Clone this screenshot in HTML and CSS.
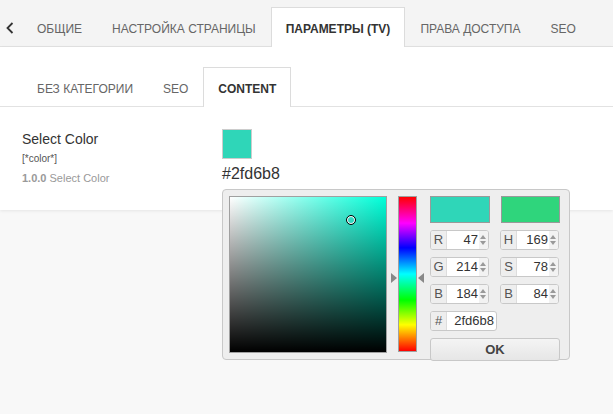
FILE: index.html
```html
<!DOCTYPE html>
<html>
<head>
<meta charset="utf-8">
<link rel="stylesheet" href="styles.css">
</head>
<body>
<div class="topbar">
  <div class="back"><svg width="8" height="12" viewBox="0 0 8 12"><path d="M6.5 1 L1.5 6 L6.5 11" fill="none" stroke="#333" stroke-width="1.8"/></svg></div>
  <div class="tab">ОБЩИЕ</div>
  <div class="tab">НАСТРОЙКА СТРАНИЦЫ</div>
  <div class="tab active">ПАРАМЕТРЫ (TV)</div>
  <div class="tab">ПРАВА ДОСТУПА</div>
  <div class="tab">SEO</div>
</div>
<div class="panel">
  <div class="subtabs">
    <div class="tab">БЕЗ КАТЕГОРИИ</div>
    <div class="tab">SEO</div>
    <div class="tab active">CONTENT</div>
  </div>
  <div class="field">
    <div class="label">
      <div class="title">Select Color</div>
      <div class="tag">[*color*]</div>
      <div class="desc"><b>1.0.0</b> Select Color</div>
    </div>
    <div class="value">
      <div class="swatch"></div>
      <div class="hex">#2fd6b8</div>
      <div class="picker">
        <div class="sv"><div class="marker"></div></div>
        <div class="hue"><span class="arr left"></span><span class="arr right"></span></div>
        <div class="side">
          <div class="row"><div class="sw new"></div><div class="sw cur"></div></div>
          <div class="row">
            <div class="inp"><span class="l">R</span><span class="v">47</span><span class="spin"></span></div>
            <div class="inp"><span class="l">H</span><span class="v">169</span><span class="spin"></span></div>
          </div>
          <div class="row">
            <div class="inp"><span class="l">G</span><span class="v">214</span><span class="spin"></span></div>
            <div class="inp"><span class="l">S</span><span class="v">78</span><span class="spin"></span></div>
          </div>
          <div class="row">
            <div class="inp"><span class="l">B</span><span class="v">184</span><span class="spin"></span></div>
            <div class="inp"><span class="l">B</span><span class="v">84</span><span class="spin"></span></div>
          </div>
          <div class="row">
            <div class="inp hexin"><span class="l">#</span><span class="v">2fd6b8</span></div>
          </div>
          <div class="ok">OK</div>
        </div>
      </div>
    </div>
  </div>
</div>
</body>
</html>
```

FILE: styles.css
```css
html, body { margin: 0; padding: 0; }
body {
  background: #f8f8f8;
  font-family: "Liberation Sans", Arial, sans-serif;
  width: 613px;
  height: 414px;
  overflow: hidden;
}
.topbar {
  display: flex;
  align-items: flex-end;
  height: 46px;
  background: #f4f4f4;
  border-bottom: 1px solid #e2e2e2;
}
.back {
  width: 22px;
  height: 39px;
  display: flex;
  align-items: center;
  padding: 3px 0 0 6px;
  box-sizing: border-box;
}
.tab {
  height: 39px;
  line-height: 43px;
  padding: 0 14px;
  border: 1px solid transparent;
  border-bottom: 0;
  font-size: 12px;
  color: #666;
  white-space: nowrap;
  box-sizing: border-box;
}
.tab.active {
  background: #fff;
  border-color: #dcdcdc;
  color: #333;
  font-weight: bold;
  height: 40px;
  margin-bottom: -1px;
}
.panel {
  background: #fff;
  height: 163px;
  box-shadow: 0 1px 3px rgba(0,0,0,0.08);
}
.subtabs {
  display: flex;
  align-items: flex-end;
  padding: 20px 0 0 22px;
  border-bottom: 1px solid #e2e2e2;
}
.field {
  display: flex;
  padding: 22px 0 0 22px;
}
.label { width: 200px; }
.title { font-size: 14px; color: #333; line-height: 18px; margin-top: 1px; }
.tag { font-size: 10px; color: #555; margin-top: 5px; line-height: 12px; }
.desc { font-size: 11px; color: #999; margin-top: 6px; line-height: 14px; }
.desc b { font-weight: bold; }
.value { position: relative; }
.swatch {
  width: 28px; height: 28px;
  background: #2fd6b8;
  border: 1px solid #ccc;
}
.hex { font-size: 16px; color: #333; line-height: 18px; margin-top: 6px; }
.picker {
  position: absolute;
  left: 0; top: 60px;
  width: 348px; height: 171px;
  background: #eee;
  border: 1px solid #c8c8c8;
  border-radius: 4px;
  display: flex;
  padding: 6px 0 0 6px;
  box-sizing: border-box;
  z-index: 2;
}
.sv {
  position: relative;
  width: 156px; height: 155px;
  border: 1px solid #a0a0a0;
  background: linear-gradient(to top, #000, rgba(0,0,0,0)), linear-gradient(to right, #fff, #00ffd9);
}
.marker {
  position: absolute;
  left: 116px; top: 18px;
  width: 8px; height: 8px;
  border: 1px solid #000;
  border-radius: 50%;
  box-shadow: inset 0 0 0 1px #fff;
}
.hue {
  position: relative;
  margin-left: 11px;
  width: 17px; height: 154px;
  border: 1px solid #a0a0a0;
  background: linear-gradient(to bottom, #f00, #f0f 17%, #00f 33%, #0ff 50%, #0f0 67%, #ff0 83%, #f00);
}
.arr {
  position: absolute;
  top: 76px;
  width: 0; height: 0;
  border-top: 5px solid transparent;
  border-bottom: 5px solid transparent;
}
.arr.left { left: -8px; border-left: 6px solid #888; }
.arr.right { right: -8px; border-right: 6px solid #888; }
.side {
  margin-left: 13px;
  width: 130px;
}
.row { display: flex; gap: 11px; margin-bottom: 7px; }
.sw { width: 58px; height: 25px; border: 1px solid #999; }
.sw.new { background: #2fd6b8; }
.sw.cur { background: #2fd57c; }
.inp {
  display: flex;
  width: 59px; height: 20px;
  border: 1px solid #c8c8c8;
  border-radius: 3px;
  background: #fff;
  box-sizing: border-box;
  overflow: hidden;
  font-size: 13px;
  line-height: 18px;
}
.inp .l {
  width: 15px;
  background: #eee;
  border-right: 1px solid #ddd;
  color: #555;
  text-align: center;
}
.inp .v {
  flex: 1;
  text-align: right;
  color: #333;
  padding-right: 1px;
}
.inp .spin {
  width: 9px;
  background: #f2f2f2;
  position: relative;
}
.inp .spin::before, .inp .spin::after {
  content: "";
  position: absolute;
  left: 1px;
  border-left: 3.5px solid transparent;
  border-right: 3.5px solid transparent;
}
.inp .spin::before { top: 4px; border-bottom: 4px solid #999; }
.inp .spin::after { top: 10px; border-top: 4px solid #999; }
.hexin { width: 67px; }
.hexin .v { padding-right: 2px; }
.ok {
  height: 23px;
  border: 1px solid #c8c8c8;
  border-radius: 3px;
  background: linear-gradient(#f4f4f4, #e6e6e6);
  text-align: center;
  font-weight: bold;
  font-size: 13px;
  line-height: 21px;
  color: #444;
  box-sizing: border-box;
}
```
